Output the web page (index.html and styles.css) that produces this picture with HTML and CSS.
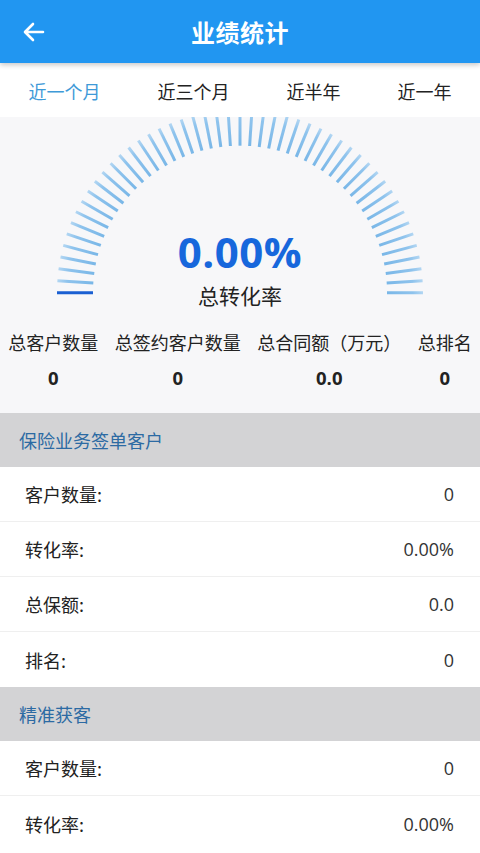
FILE: index.html
```html
<!DOCTYPE html>
<html lang="zh">
<head>
<meta charset="utf-8">
<title>业绩统计</title>
<link rel="stylesheet" href="styles.css">
</head>
<body>
<header class="appbar">
  <div class="back">
    <svg width="22" height="20" viewBox="0 0 22 20"><path d="M20 10H3M10 2L2 10l8 8" fill="none" stroke="#fff" stroke-width="2.6" stroke-linecap="round" stroke-linejoin="round"/></svg>
  </div>
  <h1 class="title">业绩统计</h1>
  <div class="spacer"></div>
</header>
<nav class="tabs">
  <span class="tab active">近一个月</span>
  <span class="tab">近三个月</span>
  <span class="tab">近半年</span>
  <span class="tab">近一年</span>
</nav>
<section class="gauge">
  <svg class="dial" width="480" height="190" viewBox="0 0 480 190">
    <defs>
      <radialGradient id="g" gradientUnits="userSpaceOnUse" cx="240" cy="175.7" r="184">
        <stop offset="0.79" stop-color="#78b6e7"/>
        <stop offset="0.94" stop-color="#8ec3ed"/>
        <stop offset="1" stop-color="#b6d8f3"/>
      </radialGradient>
      <line id="t" x1="57" y1="175.7" x2="93" y2="175.7" stroke="url(#g)" stroke-width="3"/>
    </defs>
    <use href="#t" transform="rotate(3.75 240 175.7)"/>
    <use href="#t" transform="rotate(7.5 240 175.7)"/>
    <use href="#t" transform="rotate(11.25 240 175.7)"/>
    <use href="#t" transform="rotate(15 240 175.7)"/>
    <use href="#t" transform="rotate(18.75 240 175.7)"/>
    <use href="#t" transform="rotate(22.5 240 175.7)"/>
    <use href="#t" transform="rotate(26.25 240 175.7)"/>
    <use href="#t" transform="rotate(30 240 175.7)"/>
    <use href="#t" transform="rotate(33.75 240 175.7)"/>
    <use href="#t" transform="rotate(37.5 240 175.7)"/>
    <use href="#t" transform="rotate(41.25 240 175.7)"/>
    <use href="#t" transform="rotate(45 240 175.7)"/>
    <use href="#t" transform="rotate(48.75 240 175.7)"/>
    <use href="#t" transform="rotate(52.5 240 175.7)"/>
    <use href="#t" transform="rotate(56.25 240 175.7)"/>
    <use href="#t" transform="rotate(60 240 175.7)"/>
    <use href="#t" transform="rotate(63.75 240 175.7)"/>
    <use href="#t" transform="rotate(67.5 240 175.7)"/>
    <use href="#t" transform="rotate(71.25 240 175.7)"/>
    <use href="#t" transform="rotate(75 240 175.7)"/>
    <use href="#t" transform="rotate(78.75 240 175.7)"/>
    <use href="#t" transform="rotate(82.5 240 175.7)"/>
    <use href="#t" transform="rotate(86.25 240 175.7)"/>
    <use href="#t" transform="rotate(90 240 175.7)"/>
    <use href="#t" transform="rotate(93.75 240 175.7)"/>
    <use href="#t" transform="rotate(97.5 240 175.7)"/>
    <use href="#t" transform="rotate(101.25 240 175.7)"/>
    <use href="#t" transform="rotate(105 240 175.7)"/>
    <use href="#t" transform="rotate(108.75 240 175.7)"/>
    <use href="#t" transform="rotate(112.5 240 175.7)"/>
    <use href="#t" transform="rotate(116.25 240 175.7)"/>
    <use href="#t" transform="rotate(120 240 175.7)"/>
    <use href="#t" transform="rotate(123.75 240 175.7)"/>
    <use href="#t" transform="rotate(127.5 240 175.7)"/>
    <use href="#t" transform="rotate(131.25 240 175.7)"/>
    <use href="#t" transform="rotate(135 240 175.7)"/>
    <use href="#t" transform="rotate(138.75 240 175.7)"/>
    <use href="#t" transform="rotate(142.5 240 175.7)"/>
    <use href="#t" transform="rotate(146.25 240 175.7)"/>
    <use href="#t" transform="rotate(150 240 175.7)"/>
    <use href="#t" transform="rotate(153.75 240 175.7)"/>
    <use href="#t" transform="rotate(157.5 240 175.7)"/>
    <use href="#t" transform="rotate(161.25 240 175.7)"/>
    <use href="#t" transform="rotate(165 240 175.7)"/>
    <use href="#t" transform="rotate(168.75 240 175.7)"/>
    <use href="#t" transform="rotate(172.5 240 175.7)"/>
    <use href="#t" transform="rotate(176.25 240 175.7)"/>
    <use href="#t" transform="rotate(180 240 175.7)"/>
    <line x1="57" y1="175.7" x2="93" y2="175.7" stroke="#1a5fd2" stroke-width="3"/>
  </svg>
  <div class="rate">0.00%</div>
  <div class="rate-label">总转化率</div>
  <div class="stats">
    <div class="stat"><div class="stat-label">总客户数量</div><div class="stat-value">0</div></div>
    <div class="stat"><div class="stat-label">总签约客户数量</div><div class="stat-value">0</div></div>
    <div class="stat"><div class="stat-label">总合同额（万元）</div><div class="stat-value">0.0</div></div>
    <div class="stat"><div class="stat-label">总排名</div><div class="stat-value">0</div></div>
  </div>
</section>
<div class="group-title">保险业务签单客户</div>
<ul class="list">
  <li class="row"><span class="key">客户数量:</span><span class="val">0</span></li>
  <li class="row"><span class="key">转化率:</span><span class="val">0.00%</span></li>
  <li class="row"><span class="key">总保额:</span><span class="val">0.0</span></li>
  <li class="row"><span class="key">排名:</span><span class="val">0</span></li>
</ul>
<div class="group-title">精准获客</div>
<ul class="list">
  <li class="row"><span class="key">客户数量:</span><span class="val">0</span></li>
  <li class="row"><span class="key">转化率:</span><span class="val">0.00%</span></li>
</ul>
</body>
</html>
```

FILE: styles.css
```css
* { box-sizing: border-box; }
html, body {
  margin: 0;
  padding: 0;
  background: #ffffff;
  font-family: "Noto Sans CJK SC", "Noto Sans", sans-serif;
  color: #222;
  overflow: hidden;
}
.appbar {
  height: 63px;
  background: #2196f1;
  display: grid;
  grid-template-columns: 64px 1fr 64px;
  align-items: center;
  position: relative;
  z-index: 2;
  box-shadow: 0 2px 5px rgba(0, 0, 0, 0.22);
}
.back {
  display: flex;
  align-items: center;
  padding-left: 23px;
  height: 100%;
}
.back svg { display: block; }
.title {
  margin: 0;
  text-align: center;
  color: #fff;
  font-size: 24px;
  font-weight: 700;
  line-height: 30px;
  letter-spacing: 0.5px;
}
.tabs {
  height: 54px;
  display: flex;
  justify-content: space-around;
  align-items: center;
  background: #fff;
  font-size: 18px;
  line-height: 24px;
  padding-top: 2px;
}
.tab { color: #222; }
.tab.active { color: #3e9ad8; }
.gauge {
  position: relative;
  height: 296px;
  background: #f7f7f9;
  overflow: hidden;
  padding-top: 110px;
}
.dial {
  position: absolute;
  left: 0;
  top: 0;
  display: block;
}
.rate {
  position: relative;
  text-align: center;
  font-family: "Open Sans", "Liberation Sans", sans-serif;
  font-weight: 700;
  font-size: 42px;
  line-height: 50px;
  color: #1767dc;
  letter-spacing: 0.5px;
}
.rate-label {
  position: relative;
  text-align: center;
  font-size: 21px;
  line-height: 30px;
  margin-top: 3px;
  color: #222;
}
.stats {
  display: flex;
  justify-content: space-around;
  margin-top: 19px;
}
.stat { text-align: center; }
.stat-label {
  font-size: 18px;
  line-height: 26px;
  color: #222;
}
.stat-value {
  margin-top: 10px;
  font-family: "Open Sans", "Liberation Sans", sans-serif;
  font-weight: 700;
  font-size: 18.5px;
  line-height: 26px;
  color: #222;
}
.group-title {
  height: 54px;
  background: #d3d3d5;
  display: flex;
  align-items: center;
  padding-left: 19px;
  font-size: 18px;
  color: #2c6aa3;
}
.list {
  list-style: none;
  margin: 0;
  padding: 0;
}
.row {
  height: 55px;
  display: flex;
  justify-content: space-between;
  align-items: center;
  padding: 0 26px 0 25px;
  border-bottom: 1px solid #efefef;
  background: #fff;
  font-size: 18px;
}
.row:last-child { border-bottom: none; }
.key { color: #222; }
.val {
  font-family: "Open Sans", "Liberation Sans", sans-serif;
  font-size: 18px;
  color: #333;
}
```
